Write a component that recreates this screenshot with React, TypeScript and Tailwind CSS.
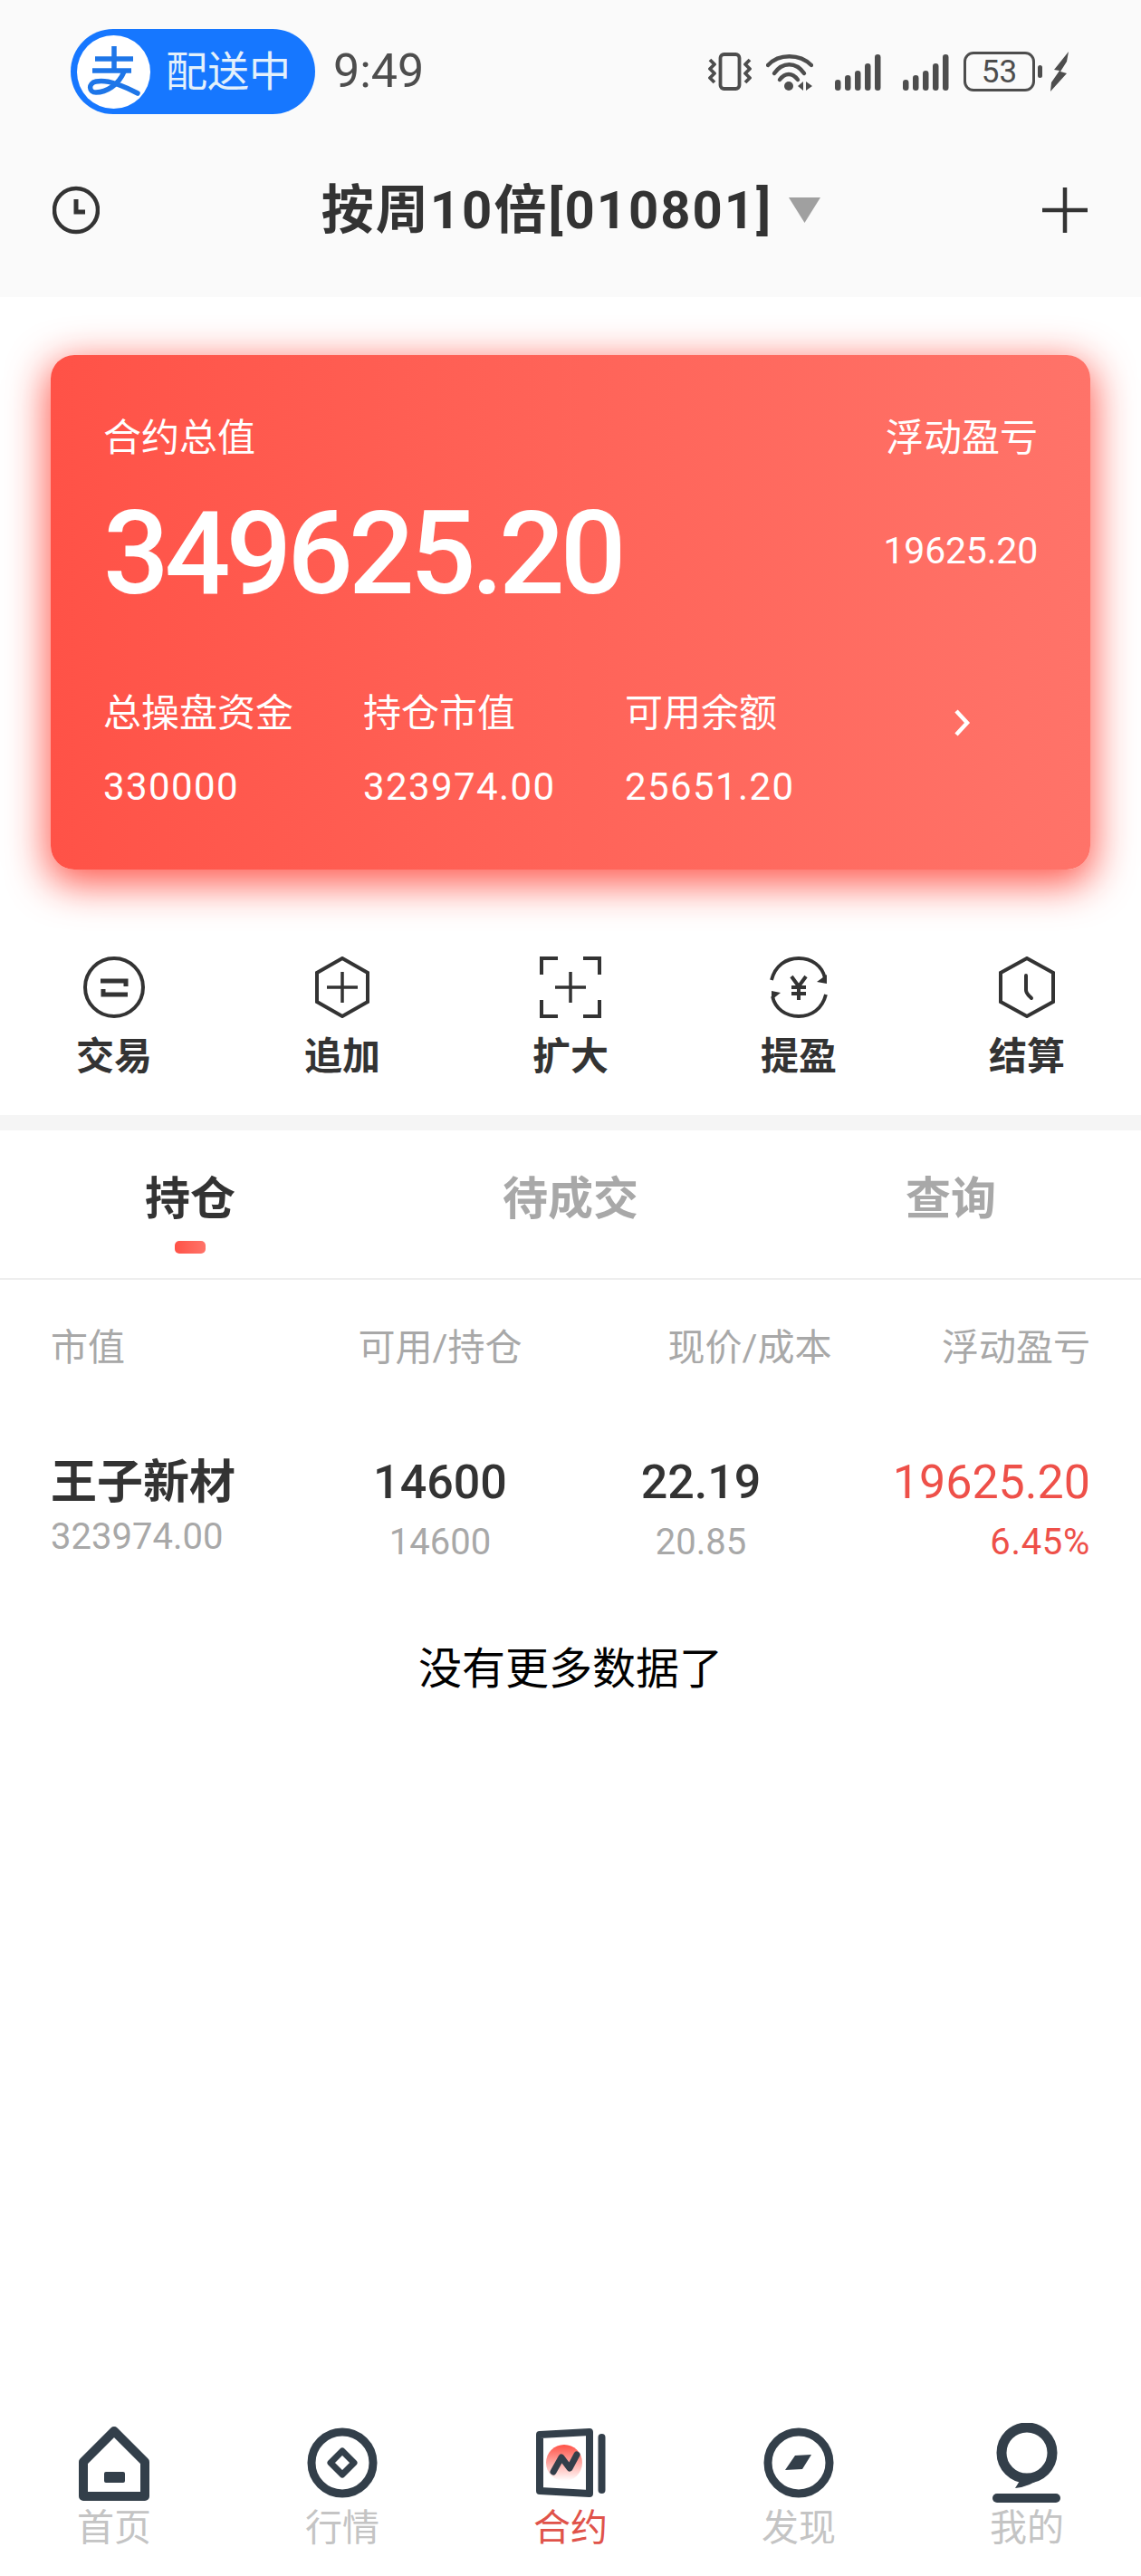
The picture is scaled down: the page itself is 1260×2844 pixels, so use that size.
import React from "react";

const ICON = "#333";
const NAV = "#333f4a";

function Signal() {
  const bars = [
    { x: 0, h: 12 },
    { x: 11, h: 17 },
    { x: 22, h: 22 },
    { x: 33, h: 30 },
    { x: 44, h: 40 },
  ];
  return (
    <svg width="51" height="41" viewBox="0 0 51 41" fill="#4d4d4d">
      {bars.map((b) => (
        <rect key={b.x} x={b.x} y={41 - b.h} width="6.5" height={b.h} rx="3.2" />
      ))}
    </svg>
  );
}

function StatusBar() {
  return (
    <div className="flex h-[94px] items-center pl-[78px] pr-[80px] mt-[32px]">
      <div className="flex h-[94px] w-[270px] items-center rounded-full bg-[#1677ff] pl-[7px]">
        <div className="flex h-[81px] w-[81px] items-center justify-center rounded-full bg-white">
          <svg width="62" height="62" viewBox="0 0 62 62" fill="none" stroke="#1e76e8" strokeWidth="5.5">
            <path d="M10 17H52" />
            <path d="M31 3V30" />
            <path d="M7 30H50" />
            <path d="M42 31C36 46 22 54 11 54C3 54 2 44 11 42C24 39 42 47 57 55" strokeLinecap="round" />
          </svg>
        </div>
        <span className="ml-[17px] text-[46px] leading-none text-[#e3f0fb]">配送中</span>
      </div>
      <span className="ml-[20px] text-[52px] leading-none text-[#4d4d4d]">9:49</span>
      <div className="ml-auto flex items-center">
        <svg width="48" height="42" viewBox="0 0 48 42" fill="none" stroke="#4d4d4d" strokeWidth="3.8" strokeLinejoin="round">
          <rect x="13.5" y="2" width="21" height="38" rx="4" />
          <path d="M2 8L7 13L2 18L7 23L2 28L7 33" />
          <path d="M46 8L41 13L46 18L41 23L46 28L41 33" />
        </svg>
        <svg className="ml-[16px]" width="52" height="41" viewBox="0 0 52 41" fill="none" stroke="#4d4d4d" strokeWidth="4.4" strokeLinecap="round">
          <path d="M2 13C14 0 37 0 50 13" />
          <path d="M9 22C18 9 33 9 42 22" />
          <path d="M15 29C21 21 29 21 35 29" />
          <circle cx="25" cy="36" r="5" fill="#4d4d4d" stroke="none" />
          <path d="M35 36L41 31V41Z M44 31L51 36L44 41Z" fill="#4d4d4d" stroke="none" />
        </svg>
        <div className="ml-[24px]">
          <Signal />
        </div>
        <div className="ml-[24px]">
          <Signal />
        </div>
        <div className="ml-[16px] flex h-[44px] w-[79px] items-center justify-center rounded-[11px] border-[3px] border-[#4d4d4d] text-[35px] leading-none text-[#4d4d4d]">
          53
        </div>
        <div className="ml-[3px] h-[14px] w-[5px] rounded-full bg-[#4d4d4d]" />
        <svg className="ml-[9px]" width="20" height="44" viewBox="0 0 20 44" fill="#4d4d4d">
          <path d="M20 0L4 20L10 21L1 34L0 44L18 24L11 22L18 11Z" />
        </svg>
      </div>
    </div>
  );
}

function Header() {
  return (
    <div className="relative mt-[10px] flex flex-1 items-center justify-between pl-[58px] pr-[59px]">
      <svg width="52" height="54" viewBox="0 0 52 54" fill="none" stroke={ICON} strokeWidth="4.5">
        <circle cx="26" cy="27" r="24" />
        <path d="M26 15V29H36" strokeWidth="5" />
      </svg>
      <div className="flex items-center">
        <span className="text-[58px] font-bold leading-none tracking-[2px] text-[#333]">按周10倍[010801]</span>
        <svg className="ml-[18px]" width="35" height="28" viewBox="0 0 35 28" fill="#a0a0a0">
          <path d="M0 0H35L17.5 28Z" />
        </svg>
      </div>
      <svg width="50" height="50" viewBox="0 0 50 50" stroke={ICON} strokeWidth="4.5">
        <path d="M25 0V50M0 25H50" />
      </svg>
    </div>
  );
}

function AssetCard() {
  const cols = [
    { label: "总操盘资金", value: "330000", w: "w-[287px]" },
    { label: "持仓市值", value: "323974.00", w: "w-[289px]" },
    { label: "可用余额", value: "25651.20", w: "w-[362px]" },
  ];
  return (
    <div className="mx-[56px] mt-[64px] h-[568px] rounded-[26px] bg-gradient-to-r from-[#ff5247] to-[#ff7369] pl-[58px] pr-[58px] pt-[67px] text-white shadow-[0_12px_44px_4px_rgba(255,82,71,0.95)]">
      <div className="flex justify-between text-[42px] leading-[50px]">
        <span>合约总值</span>
        <span>浮动盈亏</span>
      </div>
      <div className="mt-[37px] flex items-center justify-between">
        <span className="text-[128px] font-medium leading-[130px] tracking-[-5px]">349625.20</span>
        <span className="mb-[6px] text-[41px] leading-none tracking-[-0.2px]">19625.20</span>
      </div>
      <div className="mt-[87px] flex">
        {cols.map((c) => (
          <div key={c.label} className={`${c.w} flex flex-col`}>
            <span className="text-[42px] leading-[50px]">{c.label}</span>
            <span className="mt-[31px] text-[42px] leading-[50px] tracking-[1.4px]">{c.value}</span>
          </div>
        ))}
        <svg className="mt-[20px]" width="20" height="30" viewBox="0 0 20 30" fill="none" stroke="#fff" strokeWidth="4.5">
          <path d="M4 2L16 15L4 28" />
        </svg>
      </div>
    </div>
  );
}

const ACTIONS: { label: string; icon: React.ReactNode }[] = [
  {
    label: "交易",
    icon: (
      <svg width="68" height="68" viewBox="0 0 68 68" fill="none" stroke={ICON} strokeWidth="4">
        <circle cx="34" cy="34" r="32" />
        <path d="M19 27H47V33" strokeWidth="5" />
        <path d="M49 42H22V36" strokeWidth="5" />
      </svg>
    ),
  },
  {
    label: "追加",
    icon: (
      <svg width="60" height="68" viewBox="0 0 60 68" fill="none" stroke={ICON} strokeWidth="4">
        <path d="M30 2L58 18V50L30 66L2 50V18Z" />
        <path d="M30 17V51M13 34H47" strokeWidth="3.5" />
      </svg>
    ),
  },
  {
    label: "扩大",
    icon: (
      <svg width="68" height="68" viewBox="0 0 68 68" fill="none" stroke={ICON} strokeWidth="4">
        <path d="M2 20V2H20M48 2H66V20M2 48V66H20M48 66H66V48" />
        <path d="M34 17V51M17 34H51" strokeWidth="3.5" />
      </svg>
    ),
  },
  {
    label: "提盈",
    icon: (
      <svg width="64" height="68" viewBox="0 0 64 68" fill="none" stroke={ICON} strokeWidth="3.8">
        <path d="M2 26C6 10 18 2 32 2C46 2 58 10 61 24" />
        <path d="M62 42C58 58 46 66 32 66C18 66 6 58 3 44" />
        <path d="M52 28L63 20V30Z M12 40L2 48V38Z" fill={ICON} stroke="none" />
        <path d="M24 22L32 33L40 22M32 33V48M24 34H40M24 41H40" strokeWidth="4" />
      </svg>
    ),
  },
  {
    label: "结算",
    icon: (
      <svg width="62" height="68" viewBox="0 0 62 68" fill="none" stroke={ICON} strokeWidth="4">
        <path d="M31 2L60 18V50L31 66L2 50V18Z" />
        <path d="M30 21V37C30 41 33 43 36 46" strokeLinecap="round" />
      </svg>
    ),
  },
];

function ActionRow() {
  return (
    <div className="mt-[96px] grid grid-cols-5">
      {ACTIONS.map((a) => (
        <div key={a.label} className="flex flex-col items-center">
          <div className="flex h-[68px] items-center">{a.icon}</div>
          <span className="mt-[23px] text-[42px] font-bold leading-[40px] text-[#333]">{a.label}</span>
        </div>
      ))}
    </div>
  );
}

function Tabs() {
  return (
    <div className="grid h-[165px] grid-cols-3 border-b-2 border-[#eeeeee] pt-[48px] text-[50px] font-bold leading-[56px]">
      <div className="flex flex-col items-center text-[#333]">
        <span>持仓</span>
        <div className="mt-[18px] h-[14px] w-[34px] rounded-[5px] bg-gradient-to-r from-[#ff5146] to-[#ff7369]" />
      </div>
      <div className="text-center text-[#a8a8a8]">待成交</div>
      <div className="text-center text-[#a8a8a8]">查询</div>
    </div>
  );
}

function Positions() {
  return (
    <div className="px-[56px]">
      <div className="grid h-[152px] grid-cols-[260px_340px_344px_204px] items-center text-[41px] text-[#a8a8a8]">
        <span>市值</span>
        <span className="text-center">可用/持仓</span>
        <span className="text-center">现价/成本</span>
        <span className="text-right">浮动盈亏</span>
      </div>
      <div className="grid grid-cols-[260px_340px_236px_312px] pt-[42px]">
        <div className="flex flex-col">
          <span className="text-[51px] font-bold leading-[60px] text-[#333]">王子新材</span>
          <span className="mt-[2px] text-[40px] leading-[56px] text-[#a8a8a8]">323974.00</span>
        </div>
        <div className="flex flex-col text-center">
          <span className="text-[52px] font-medium leading-[60px] text-[#333]">14600</span>
          <span className="mt-[8px] text-[40px] leading-[56px] text-[#a8a8a8]">14600</span>
        </div>
        <div className="flex flex-col text-center">
          <span className="text-[52px] font-medium leading-[60px] text-[#333]">22.19</span>
          <span className="mt-[8px] text-[40px] leading-[56px] text-[#a8a8a8]">20.85</span>
        </div>
        <div className="flex flex-col text-right text-[#ee5049]">
          <span className="text-[52px] leading-[60px]">19625.20</span>
          <span className="mt-[8px] text-[40px] leading-[56px] tracking-[0.7px]">6.45%</span>
        </div>
      </div>
      <div className="mt-[84px] text-center text-[48px] leading-[56px] text-black">没有更多数据了</div>
    </div>
  );
}

const NAV_ITEMS: { label: string; active?: boolean; icon: React.ReactNode }[] = [
  {
    label: "首页",
    icon: (
      <svg width="90" height="90" viewBox="0 0 90 90" fill="none" stroke={NAV} strokeWidth="10" strokeLinejoin="round">
        <path d="M45 9L11 43V81H79V43Z" />
        <rect x="34" y="54" width="23" height="12" rx="2" fill={NAV} stroke="none" />
      </svg>
    ),
  },
  {
    label: "行情",
    icon: (
      <svg width="90" height="90" viewBox="0 0 90 90" fill="none" stroke={NAV} strokeLinejoin="round">
        <circle cx="45" cy="44" r="34" strokeWidth="9" />
        <path d="M45 31L58 44L45 57L32 44Z" strokeWidth="7" />
      </svg>
    ),
  },
  {
    label: "合约",
    active: true,
    icon: (
      <svg width="90" height="90" viewBox="0 0 90 90" fill="none" stroke={NAV} strokeLinejoin="round" strokeLinecap="round">
        <defs>
          <linearGradient id="navRed" x1="0" y1="0" x2="0" y2="1">
            <stop offset="0" stopColor="#ff5146" />
            <stop offset="1" stopColor="#ffffff" />
          </linearGradient>
        </defs>
        <path d="M11 13L66 10V78L11 75Z" strokeWidth="8" />
        <ellipse cx="38" cy="44" rx="20" ry="20" fill="url(#navRed)" stroke="none" />
        <path d="M26 54L35 38L44 50L52 35" strokeWidth="7" />
        <path d="M79.5 16V74" strokeWidth="8" />
      </svg>
    ),
  },
  {
    label: "发现",
    icon: (
      <svg width="90" height="90" viewBox="0 0 90 90" fill="none" stroke={NAV}>
        <circle cx="45" cy="44" r="34" strokeWidth="9" />
        <path d="M41 36L59 35L49 51L30 52Z" fill={NAV} stroke="none" />
      </svg>
    ),
  },
  {
    label: "我的",
    icon: (
      <svg width="90" height="90" viewBox="0 0 90 90" fill="none" stroke={NAV}>
        <circle cx="45" cy="33" r="28" strokeWidth="11" />
        <path d="M32 58L37 64L32 72Q50 70 60 60Z" fill={NAV} stroke="none" />
        <rect x="7" y="78" width="75" height="10" rx="5" fill={NAV} stroke="none" />
      </svg>
    ),
  },
];

function BottomNav() {
  return (
    <div className="mt-auto grid grid-cols-5 pb-[32px]">
      {NAV_ITEMS.map((n) => (
        <div key={n.label} className="flex flex-col items-center">
          {n.icon}
          <span className={`mt-[6px] text-[41px] leading-[41px] ${n.active ? "text-[#e0534a]" : "text-[#c4c4c4]"}`}>
            {n.label}
          </span>
        </div>
      ))}
    </div>
  );
}

export default function App() {
  return (
    <div className="flex h-[2844px] w-[1260px] flex-col overflow-hidden bg-white font-[family-name:Roboto,'Noto_Sans_CJK_SC',sans-serif]">
      <div className="flex h-[328px] flex-col bg-[#fafafa]">
        <StatusBar />
        <Header />
      </div>
      <AssetCard />
      <ActionRow />
      <div className="mt-[44px] h-[17px] bg-[#f5f5f5]" />
      <Tabs />
      <Positions />
      <BottomNav />
    </div>
  );
}
